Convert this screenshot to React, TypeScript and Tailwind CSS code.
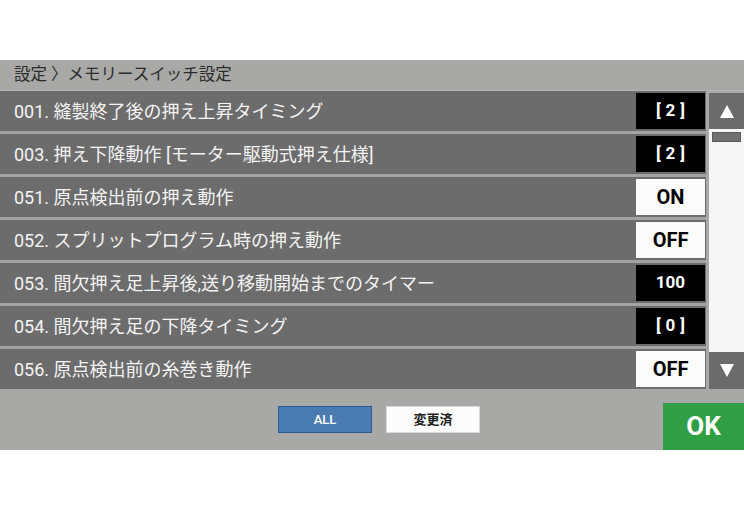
import React from "react";

type Item = { label: string; value: string; dark: boolean };

// Seven visible memory-switch rows; dark boxes hold numeric values, light ones ON/OFF.
const items: Item[] = [
  { label: "001. 縫製終了後の押え上昇タイミング", value: "[2]", dark: true },
  { label: "003. 押え下降動作 [モーター駆動式押え仕様]", value: "[2]", dark: true },
  { label: "051. 原点検出前の押え動作", value: "ON", dark: false },
  { label: "052. スプリットプログラム時の押え動作", value: "OFF", dark: false },
  { label: "053. 間欠押え足上昇後,送り移動開始までのタイマー", value: "100", dark: true },
  { label: "054. 間欠押え足の下降タイミング", value: "[0]", dark: true },
  { label: "056. 原点検出前の糸巻き動作", value: "OFF", dark: false },
];

const font = "font-['Roboto','Noto_Sans_CJK_JP',sans-serif]";

function Triangle({ up }: { up: boolean }) {
  return (
    <svg width="16" height="15" viewBox="0 0 16 15">
      <polygon points={up ? "8,1 15,14 1,14" : "1,1 15,1 8,14"} fill="#ffffff" />
    </svg>
  );
}

function Row({ item }: { item: Item }) {
  const bracket = item.value.startsWith("[");
  return (
    <div className="flex h-[40px] items-center bg-[#6c6c6c] pl-[14px] pr-[1px]">
      <span className="flex-1 whitespace-nowrap text-[18px] leading-normal text-[#f4f4f4]">{item.label}</span>
      <div
        className={
          item.dark
            ? "flex h-[36px] w-[69px] items-center justify-center bg-black text-[17px] font-bold text-white"
            : "flex h-[36px] w-[69px] items-center justify-center bg-[#fbfbfb] text-[20px] font-bold text-black"
        }
      >
        <span className={bracket ? "tracking-[5px] pl-[5px]" : ""}>{item.value}</span>
      </div>
    </div>
  );
}

export default function App() {
  return (
    <div className={`flex h-[510px] w-[744px] flex-col bg-white ${font}`}>
      <div className="h-[60px]" />
      <div className="flex h-[390px] flex-col bg-[#a8a9a6]">
        <div className="flex h-[31px] items-center border-b border-[#b4b5b2] px-[14px] text-[16.5px] text-[#2c2c2c]">
          設定 〉メモリースイッチ設定
        </div>

        <div className="flex h-[298px] gap-[3px]">
          <div className="flex w-[706px] flex-col gap-[3px] bg-[#a3a3a3]">
            {items.map((item) => (
              <Row key={item.label} item={item} />
            ))}
          </div>
          <div className="flex flex-1 flex-col pt-[2px]">
            <div className="flex h-[36px] items-center justify-center bg-[#6b6b6b]">
              <Triangle up />
            </div>
            <div className="flex flex-1 flex-col bg-[#f6f6f6] px-[3px] pt-[3px]">
              <div className="h-[10px] border border-[#5a5a5a] bg-[#707070]" />
            </div>
            <div className="flex h-[37px] items-center justify-center bg-[#6b6b6b]">
              <Triangle up={false} />
            </div>
          </div>
        </div>

        <div className="flex flex-1 items-start">
          <div className="ml-[278px] mt-[17px] flex gap-[14px]">
            <div className="flex h-[27px] w-[94px] items-center justify-center border border-[#2c5a91] bg-[#4a7bb3] text-[13px] font-medium text-white">
              ALL
            </div>
            <div className="flex h-[27px] w-[94px] items-center justify-center border border-[#d8d8d8] bg-[#fcfcfc] text-[13px] font-bold text-[#222]">
              変更済
            </div>
          </div>
          <div className="ml-auto mt-[14px] flex h-[47px] w-[81px] items-center justify-center bg-[#2f9e45] text-[26px] font-bold text-white">
            OK
          </div>
        </div>
      </div>
    </div>
  );
}
